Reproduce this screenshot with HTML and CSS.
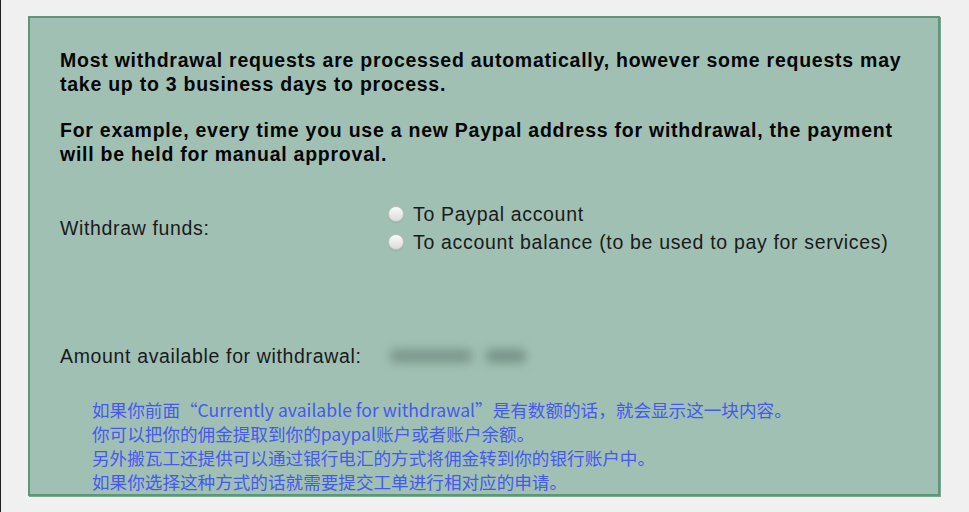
FILE: index.html
```html
<!DOCTYPE html>
<html lang="en">
<head>
<meta charset="utf-8">
<title>Withdraw</title>
<link rel="stylesheet" href="styles.css">
</head>
<body>
<div class="page">
  <div class="panel">
    <p class="notice">Most withdrawal requests are processed automatically, however some requests may take up to 3 business days to process.</p>
    <p class="notice notice-second">For example, every time you use a new Paypal address for withdrawal, the payment will be held for manual approval.</p>
    <div class="row row-funds">
      <div class="label">Withdraw funds:</div>
      <div class="options">
        <label class="option"><input type="radio" name="dest" class="radio"><span>To Paypal account</span></label>
        <label class="option"><input type="radio" name="dest" class="radio"><span>To account balance (to be used to pay for services)</span></label>
      </div>
    </div>
    <div class="row row-amount">
      <div class="label">Amount available for withdrawal:</div>
      <div class="blurred"><span class="blob blob-a"></span><span class="blob blob-b"></span></div>
    </div>
    <div class="note">
      <div>如果你前面“Currently available for withdrawal”是有数额的话，就会显示这一块内容。</div>
      <div>你可以把你的佣金提取到你的paypal账户或者账户余额。</div>
      <div>另外搬瓦工还提供可以通过银行电汇的方式将佣金转到你的银行账户中。</div>
      <div>如果你选择这种方式的话就需要提交工单进行相对应的申请。</div>
    </div>
  </div>
</div>
</body>
</html>
```
FILE: styles.css
```css
html, body {
  margin: 0;
  padding: 0;
  background: #f0f0f0;
}
body {
  font-family: "Liberation Sans", Arial, sans-serif;
  color: #111;
  border-left: 1px solid #1e1e1e;
  min-height: 512px;
  box-sizing: border-box;
}
.page {
  padding: 16px 0 0 27px;
}
.panel {
  box-sizing: border-box;
  width: 912px;
  height: 480px;
  background: #a0c0b4;
  border: 2px solid #5f967a;
  box-shadow: 1px 1px 0 #7aa892;
  padding: 30px 20px 0 30px;
  overflow: hidden;
}
.notice {
  margin: 0;
  font-weight: bold;
  font-size: 19.5px;
  letter-spacing: 0.75px;
  line-height: 24px;
  color: #050505;
}
.notice-second {
  margin-top: 22px;
}
.row {
  display: grid;
  grid-template-columns: 328px 1fr;
  align-items: center;
}
.label {
  font-size: 19.5px;
  letter-spacing: 0.65px;
  line-height: 28px;
  color: #1a1a1a;
}
.row-funds {
  margin-top: 34px;
}
.options {
  display: flex;
  flex-direction: column;
}
.option {
  display: flex;
  align-items: center;
  font-size: 19.5px;
  letter-spacing: 0.67px;
  line-height: 28px;
  color: #1a1a1a;
}
.radio {
  appearance: none;
  -webkit-appearance: none;
  margin: 0 9px 0 0;
  width: 16px;
  height: 16px;
  border-radius: 50%;
  border: 1px solid #b9c2bf;
  background: linear-gradient(#fafafa, #dcdcdc);
  box-sizing: border-box;
  box-shadow: 0 1px 1px rgba(0,0,0,0.08);
}
.row-amount {
  margin-top: 86px;
}
.blurred {
  display: flex;
  align-items: center;
  gap: 14px;
  height: 28px;
  padding-left: 2px;
}
.blob {
  display: block;
  height: 14px;
  background: #7d998f;
  filter: blur(5px);
  border-radius: 5px;
}
.blob-a { width: 82px; }
.blob-b { width: 40px; background: #78958b; }
.note {
  margin-top: 28px;
  padding-left: 32px;
  font-family: "Noto Sans CJK SC", "Liberation Sans", sans-serif;
  font-size: 17.6px;
  line-height: 24px;
  color: #4659ee;
  white-space: nowrap;
}
```
